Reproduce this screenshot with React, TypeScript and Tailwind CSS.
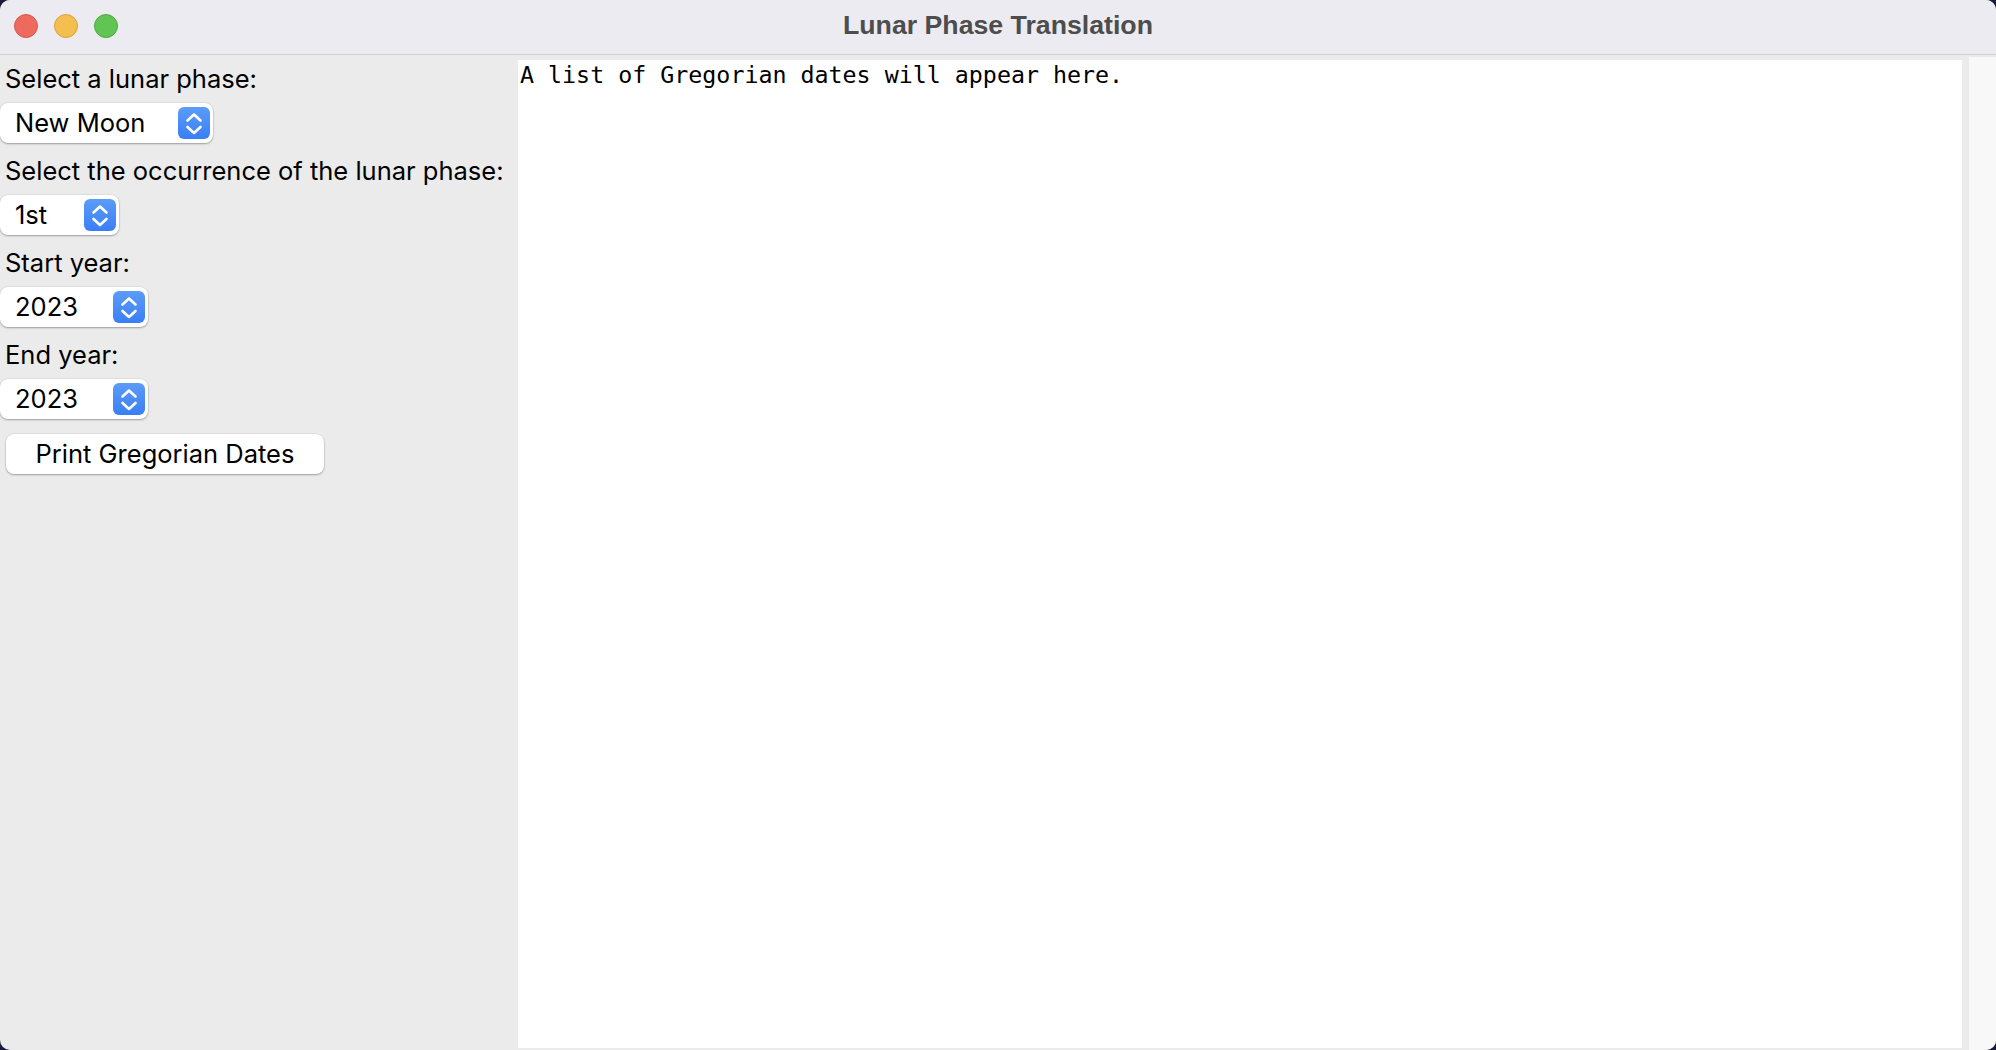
import React from 'react'

const sans = { fontFamily: 'Inter, "Liberation Sans", sans-serif' }

function Stepper() {
  return (
    <span className="flex h-8 w-8 items-center justify-center rounded-[6px] bg-gradient-to-b from-[#5b9cf8] to-[#3a7ef6]">
      <svg width="32" height="32" viewBox="0 0 32 32" fill="none" stroke="white" strokeWidth="2.6" strokeLinecap="round" strokeLinejoin="round">
        <path d="M9.5 13.5 L16 7.5 L22.5 13.5" />
        <path d="M9.5 20 L16 26 L22.5 20" />
      </svg>
    </span>
  )
}

function Select({ value, width }: { value: string; width: string }) {
  return (
    <div
      className={`mt-[11px] flex h-10 items-center justify-between rounded-[8px] bg-white pl-[15px] pr-[3px] text-[25.5px] text-black shadow-[0_1px_2px_rgba(0,0,0,0.3),0_0_0_0.5px_rgba(0,0,0,0.08)] ${width}`}
    >
      <span>{value}</span>
      <Stepper />
    </div>
  )
}

function Label({ children, first }: { children: React.ReactNode; first?: boolean }) {
  return (
    <p className={`pl-[5px] text-[25.5px] leading-[27px] text-black ${first ? '' : 'mt-[14px]'}`}>
      {children}
    </p>
  )
}

export default function App() {
  return (
    <div className="h-[1050px] w-[1996px] bg-[#1b1b3c]" style={sans}>
      <div className="flex h-full w-full flex-col overflow-hidden rounded-[10px] bg-[#ebebeb]">
        {/* title bar */}
        <div className="relative flex h-[55px] shrink-0 items-center justify-center border-b border-[#cfcfd4] bg-[#ecebf2]">
          <div className="absolute left-[14px] top-[14px] flex gap-[16px]">
            <span className="h-6 w-6 rounded-full border border-[#d8584d] bg-[#ee6a5f]" />
            <span className="h-6 w-6 rounded-full border border-[#d9a23d] bg-[#f5bf4f]" />
            <span className="h-6 w-6 rounded-full border border-[#4ea93f] bg-[#61c554]" />
          </div>
          <h1 className="pb-[3px] text-[26.7px] text-[#4d4d4d]" style={{ fontFamily: '"Liberation Sans", sans-serif', fontWeight: 700 }}>
            Lunar Phase Translation
          </h1>
        </div>

        <div className="flex min-h-0 flex-1">
          {/* controls */}
          <div className="flex w-[518px] shrink-0 flex-col items-start pt-[10px]">
            <Label first>Select a lunar phase:</Label>
            <Select value="New Moon" width="w-[213px]" />
            <Label>Select the occurrence of the lunar phase:</Label>
            <Select value="1st" width="w-[119px]" />
            <Label>Start year:</Label>
            <Select value="2023" width="w-[148px]" />
            <Label>End year:</Label>
            <Select value="2023" width="w-[148px]" />
            <button className="ml-[6px] mt-[15px] h-10 w-[318px] rounded-[8px] bg-white text-[25.5px] text-black shadow-[0_1px_2px_rgba(0,0,0,0.3),0_0_0_0.5px_rgba(0,0,0,0.08)]">
              Print Gregorian Dates
            </button>
          </div>

          {/* output */}
          <div className="flex flex-1 pb-[2px] pt-[5px]">
            <div
              className="w-[1444px] bg-white pl-[2px] pt-[2px] text-[23.3px] leading-[26px] text-black"
              style={{ fontFamily: '"DejaVu Sans Mono", monospace' }}
            >
              A list of Gregorian dates will appear here.
            </div>
            <div className="w-[7px]" />
            <div className="-mb-[2px] -mt-[3px] flex-1 bg-[#f8f8f8]" />
          </div>
        </div>
      </div>
    </div>
  )
}
